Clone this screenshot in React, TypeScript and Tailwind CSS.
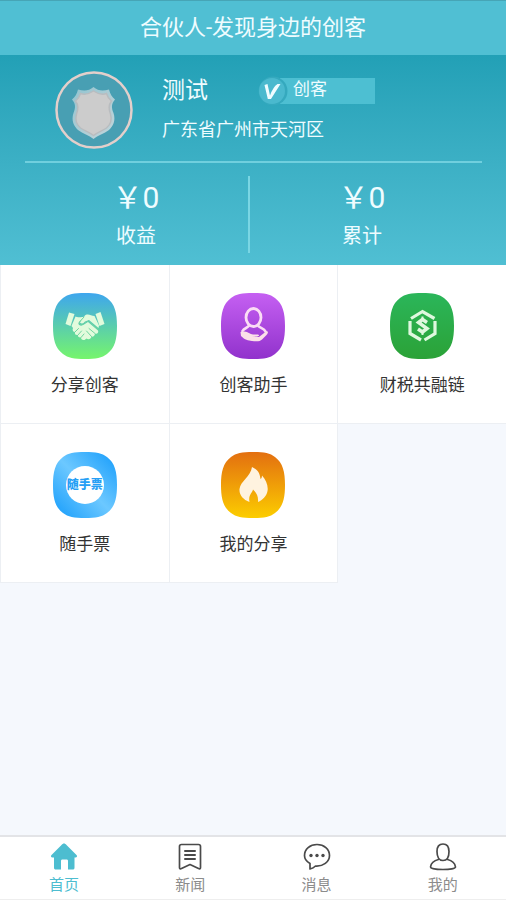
import React from "react";

const SQUIRCLE =
  "M32 0C43 0 49 1 54 5C62 11 64 20 64 33C64 46 62 55 54 61C49 65 43 66 32 66C21 66 15 65 10 61C2 55 0 46 0 33C0 20 2 11 10 5C15 1 21 0 32 0Z";

function TileIcon({ id, from, to, diagonal, children }: {
  id: string;
  from: string;
  to: string;
  diagonal?: boolean;
  children?: React.ReactNode;
}) {
  return (
    <svg viewBox="0 0 64 66" className="h-[66px] w-16" aria-hidden="true">
      <defs>
        <linearGradient id={id} x1={diagonal ? "1" : "0"} y1="0" x2="0" y2="1">
          <stop offset="0" stopColor={from} />
          {diagonal && <stop offset="0.5" stopColor="#6cc8ff" />}
          <stop offset="1" stopColor={to} />
        </linearGradient>
      </defs>
      <path d={SQUIRCLE} fill={`url(#${id})`} />
      {children}
    </svg>
  );
}

const shareIcon = (
  <TileIcon id="share" from="#3ea6ee" to="#76f56c">
    <g fill="#e2fbdc">
      <path d="M16 19.500L21.500 21L17.500 33L12.500 31Z" />
      <path d="M42.500 21L47.500 19L51.500 31L46.500 33Z" />
      <path d="M22.500 23.500C25 25 28 23.500 31 24L26 29C24 32 28 34 31 31.500L35 29L45 37.500C46 39.500 44 41.500 42 40.500C42 43 40 44 38.500 43.500C38 46 35.500 47 33.500 45.500L31.500 47C29 47.500 28 46 28 44.500C26 45 24.500 43.500 25 42C22.500 42.500 21.500 41 22 39C20 39 19 37 20 35L18.500 33Z" />
      <path d="M41.500 23C38 23 36 20.500 32.500 22C30 24 28 27 27 29.500C28.500 31.500 30.500 30.500 32 28.500L36 27L45.500 35L46 32.500Z" />
    </g>
    <g fill="none" stroke="#6fd6a0" strokeWidth="1" strokeLinecap="round">
      <path d="M36 35.500L42 40.500M33.500 38L38.500 43.500M22 39L25.500 35.500M25 42L28.500 38M28 44.500L31 41" />
      <path d="M31 24L26.500 29C25.500 32 29 32.500 31.500 30L35.500 28L45 36.500" />
    </g>
  </TileIcon>
);

const helperIcon = (
  <TileIcon id="helper" from="#c560f2" to="#9132cc">
    <g fill="none" stroke="#fbdcf5" strokeLinecap="round" strokeLinejoin="round">
      <ellipse cx="32.500" cy="24.500" rx="7.500" ry="9" strokeWidth="2.800" />
      <path d="M28 32.500C27 35 23 35 21.500 38M37 32.500C38 35 43 35 44.500 38.500" strokeWidth="2.600" />
    </g>
    <path d="M19.500 39L23.500 38.500C27 39 29 41 32 41.500L37 41.500C39 42 38 43.500 36 43.500L31 43.500L38 44L45 38.500C47.500 37.500 47.500 40 45.500 42L41 46.500C39 48.500 36 48.500 31 48C27 47.500 24 47 20 43Z" fill="#fbe0e8" />
  </TileIcon>
);

const chainIcon = (
  <TileIcon id="chain" from="#2bb65a" to="#2ba237">
    <g fill="none" stroke="#dff8df" strokeWidth="3.200">
      <path d="M21 25.500L32.500 18.500L44.500 25.500" />
      <path d="M20 28V40.500L31 47" />
      <path d="M45 28V40.500L34.500 47" />
      <path d="M37 29.500L32.500 26.500L28.500 29.500L37 35.500L32.500 39L28 36" strokeWidth="3.500" />
      <path d="M32.500 23.500V28M32.500 37V42" strokeWidth="2" />
    </g>
  </TileIcon>
);

const ticketIcon = (
  <div className="grid place-items-center">
    <div className="col-start-1 row-start-1 h-[66px]">
      <TileIcon id="ticket" from="#149bfb" to="#149bfb" diagonal>
        <circle cx="32" cy="33" r="19" fill="#ffffff" />
      </TileIcon>
    </div>
    <span className="col-start-1 row-start-1 text-[12px] leading-4 font-black text-[#269ff5]">随手票</span>
  </div>
);

const fireIcon = (
  <TileIcon id="fire" from="#e36f10" to="#fccd00">
    <path
      d="M31 15C38 18 39 23 39.500 27C40.500 26.500 41 25 41 23.500C45 28 47.500 34 46.500 39C45.500 44.500 41.500 48 37 50C37.500 45 36 41 32 37.500C31.500 40.500 27 43 28.500 50C22 47.500 18 43 18.500 37C19.500 29 29.500 25 31 15Z"
      fill="#fff3df"
    />
  </TileIcon>
);

const tiles = [
  { label: "分享创客", icon: shareIcon },
  { label: "创客助手", icon: helperIcon },
  { label: "财税共融链", icon: chainIcon },
  { label: "随手票", icon: ticketIcon },
  { label: "我的分享", icon: fireIcon },
];

const line = {
  fill: "none",
  stroke: "#4a4a4a",
  strokeWidth: 1.7,
  strokeLinejoin: "round",
  strokeLinecap: "round",
} as const;

const navItems = [
  {
    label: "首页",
    active: true,
    icon: (
      <path
        d="M14 .500C15 .500 15.500 1 16.500 2L26.500 12C27.500 13 27 14.500 25.500 14.500H24.500V24.500C24.500 26 24 26.500 22.500 26.500H18V18C18 17 17.500 16.500 16.500 16.500H12.500C11.500 16.500 11 17 11 18V26.500H6C4.500 26.500 4 26 4 24.500V14.500H2.500C1 14.500 .500 13 1.500 12L11.500 2C12.500 1 13 .500 14 .500Z"
        fill="#4dbdd0"
      />
    ),
  },
  {
    label: "新闻",
    icon: (
      <g {...line}>
        <path d="M5.500 1.500H22.500Q24.500 1.500 24.500 3.500V24.500Q24.500 26.500 22.500 25.500L14 21.500L5.500 25.500Q3.500 26.500 3.500 24.500V3.500Q3.500 1.500 5.500 1.500Z" />
        <path d="M9 8H19M9 12H19M9 16H19" strokeWidth="2" />
      </g>
    ),
  },
  {
    label: "消息",
    icon: (
      <g {...line}>
        <path d="M7 20.500C3.500 18.500 1.500 16 1.500 12.500C1.500 6 7 1.500 14 1.500S26.500 6 26.500 12.500C26.500 19 20 23.500 12.500 23C11 24.500 9 25.500 7 26Z" />
        <g fill="#4a4a4a" stroke="none">
          <circle cx="8" cy="12.500" r="1.700" />
          <circle cx="14" cy="12.500" r="1.700" />
          <circle cx="20" cy="12.500" r="1.700" />
        </g>
      </g>
    ),
  },
  {
    label: "我的",
    icon: (
      <g {...line}>
        <path d="M14 1C18 1 20 3.500 20 8.500C20 14 18 17.500 14 17.500S8 14 8 8.500C8 3.500 10 1 14 1Z" />
        <path d="M9.500 16.500C5 17.500 2 20.500 1.500 24C1.500 25.500 7 26.500 14 26.500S26.500 25.500 26.500 24C26 20.500 23 17.500 18.500 16.500" />
      </g>
    ),
  },
];

const stats = [
  { label: "收益", value: "0" },
  { label: "累计", value: "0" },
];

export default function App() {
  return (
    <div className="flex min-h-screen flex-col bg-[#f5f8fd] font-['Roboto','Noto_Sans_CJK_SC',sans-serif]">
      <header className="flex h-[55px] items-center justify-center border-t border-[#46a5b6] bg-[#50bfd3]">
        <h1 className="text-[22px] leading-8 text-[#effcff]">合伙人-发现身边的创客</h1>
      </header>

      <section className="bg-linear-to-b from-[#22a0b6] to-[#50bfd3] text-[#effcff]">
        <div className="flex pt-4 pl-[55px]">
          <svg viewBox="0 0 78 78" className="size-[78px] shrink-0" role="img" aria-label="头像">
            <defs>
              <linearGradient id="rim" x1="0" y1="0" x2="1" y2="1">
                <stop offset="0" stopColor="#93c4d0" />
                <stop offset="1" stopColor="#c3d5da" />
              </linearGradient>
            </defs>
            <circle cx="39" cy="39" r="37.500" fill="#489fb3" stroke="#e3cfcb" strokeWidth="2.500" />
            <path d="M38.500 16C43 20 48 20 54 18.500C55 23 57 26 60 28.500C56 33 56.500 37 58.500 42C61 50 58 55 54 59C49 63 43 64 38.500 68C34 64 28 63 23 59C19 55 16 50 18.500 42C20.500 37 21 33 17 28.500C20 26 22 23 23 18.500C29 20 34 20 38.500 16Z" fill="url(#rim)" />
            <path d="M38.500 20C43 23 47 24 51.500 22.500C52.500 26 54 28 56.500 30C53.500 34 53.500 38 55.500 43C57.500 50 55 54 51.500 57C47 60 42 61.500 38.500 64.500C35 61.500 30 60 25.500 57C22 54 19.500 50 21.500 43C23.500 38 23.500 34 20.500 30C23 28 24.500 26 25.500 22.500C30 24 34 23 38.500 20Z" fill="#cccccc" stroke="#b9bcbf" strokeWidth="1.500" />
          </svg>
          <div className="ml-[29px]">
            <div className="flex items-center">
              <h2 className="w-24 text-[23px] leading-10">测试</h2>
              <div className="flex h-[26px] items-center">
                <svg viewBox="0 0 30 30" className="z-10 size-[30px]" aria-hidden="true">
                  <circle cx="15" cy="15" r="14.500" fill="#35a9be" />
                  <circle cx="14" cy="15" r="13" fill="#4ab9ce" />
                  <path d="M6.500 9L9.500 8L12 19.500Q15 11 19.500 8H22.500Q18 15 13 23H9.800Z" fill="#effcff" />
                </svg>
                <span className="-ml-2 h-[26px] w-[95px] bg-[#4dbfd2] pl-[13px] text-[17px] leading-[22px]">创客</span>
              </div>
            </div>
            <p className="text-[18px] leading-[38px]">广东省广州市天河区</p>
          </div>
        </div>
        <div className="mr-6 ml-[25px] mt-3 h-0.5 bg-[#70cfde]" />
        <dl className="flex pt-[13px] pr-8 pb-3 pl-6">
          {stats.map((stat, i) => (
            <div
              key={stat.label}
              className={`flex h-[77px] flex-1 flex-col-reverse items-center justify-end ${i ? "" : "border-r-2 border-[#7ad6e4]"}`}
            >
              <dt className="text-[20px] leading-8">{stat.label}</dt>
              <dd className="text-[30px] leading-11">￥{stat.value}</dd>
            </div>
          ))}
        </dl>
      </section>

      <main className="flex-1 overflow-hidden">
        <div className="grid grid-cols-3">
          {tiles.map((tile) => (
            <button
              key={tile.label}
              type="button"
              className="-mr-px flex h-[159px] flex-col items-center border-x border-b border-[#eceff3] bg-white pt-7 text-[17px] leading-6 text-[#333333]"
            >
              {tile.icon}
              <span className="mt-3.5">{tile.label}</span>
            </button>
          ))}
        </div>
      </main>

      <nav className="grid h-[65px] grid-cols-4 border-t-2 border-b border-t-[#e3e4e7] border-b-[#eeeeee] bg-white pl-px">
        {navItems.map((item) => (
          <a
            key={item.label}
            href="#"
            className={`flex flex-col items-center pt-1.5 text-[15px] leading-6 ${item.active ? "text-[#4dbdd0]" : "text-[#8c8c8c]"}`}
          >
            <svg viewBox="0 0 28 28" className="size-7" aria-hidden="true">
              {item.icon}
            </svg>
            <span className="mt-0.5">{item.label}</span>
          </a>
        ))}
      </nav>
    </div>
  );
}
